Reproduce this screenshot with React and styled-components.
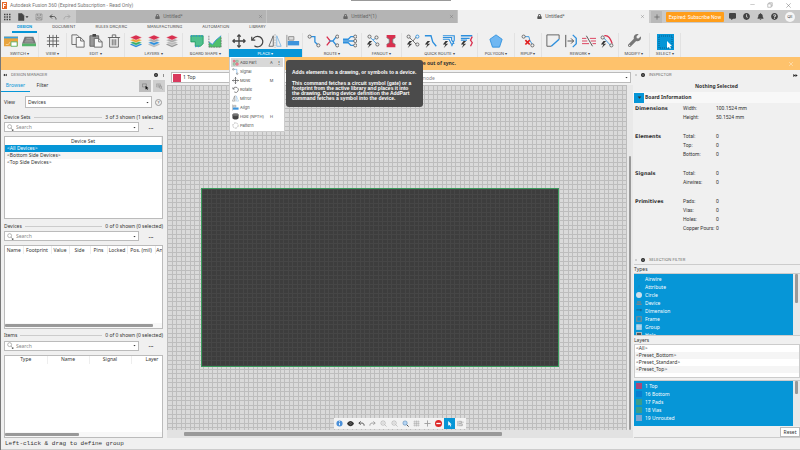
import React, { useState } from 'react';
import styled, { createGlobalStyle } from 'styled-components';
import { FaLock, FaWrench, FaBell, FaQuestionCircle, FaClock, FaCommentAlt } from 'react-icons/fa';

const blue = '#0696d7';
const sans = "'Noto Sans', sans-serif";
const ui = "'Inter', 'Liberation Sans', sans-serif";

const GlobalStyle = createGlobalStyle`
  * { box-sizing: border-box; }
  body {
    margin: 0;
    background: #f0f0f0;
    color: #333;
    font: 5px/7px ${sans};
  }
  button, input, select {
    font: inherit;
    color: inherit;
    margin: 0;
    padding: 0;
    border: 0;
    background: none;
  }
  svg { display: block; flex: none; }
`;

const Page = styled.div`
  display: flex;
  flex-direction: column;
  height: 100vh;
  border-left: 1px solid #777;
  overflow: hidden;
`;

/* ---------- title bar and document tabs ---------- */

const TitleBar = styled.header`
  position: relative;
  display: flex;
  align-items: center;
  gap: 3px;
  height: 10px;
  padding: 0 8px 0 1px;
  background: #fff;
  color: #777;
  font: 5px/8px Roboto, sans-serif;
`;
const TopHandle = styled.i`
  position: absolute;
  top: 0;
  left: 50%;
  width: 100px;
  height: 1px;
  margin-left: -50px;
  background: #999;
`;
const WindowButtons = styled.div`
  display: flex;
  gap: 12px;
  margin-left: auto;
  button { display: flex; }
`;
const TabBar = styled.div`
  display: flex;
  height: 13px;
  background: #c9c9c9;
`;
const QuickAccess = styled.div`
  display: flex;
  align-items: center;
  gap: 6px;
  flex: 0 0 75px;
  padding-left: 2px;
  button { display: flex; align-items: center; }
`;
const DocTab = styled.div`
  flex: 1;
  display: flex;
  align-items: center;
  padding-right: 3px;
  border-right: 1px solid ${({ $active }) => ($active ? '#f0f0f0' : '#c4c4c4')};
  background: ${({ $active }) => ($active ? '#f0f0f0' : '#b4b4b4')};
  color: ${({ $active }) => ($active ? '#555' : '#666')};
  font: 5px/7px Roboto, sans-serif;
`;
const DocName = styled.button`
  flex: 1;
  display: flex;
  align-items: center;
  justify-content: center;
  gap: 3px;
  padding-left: 4px;
`;
const TabTools = styled.div`
  display: flex;
  align-items: center;
  flex: 0 0 151px;
  padding: 0 5px 0 2px;
  color: #444;
`;
const AddTab = styled.button`
  display: flex;
  align-items: center;
  justify-content: center;
  width: 11px;
  height: 12px;
  background: #b9b9b9;
`;
const Subscribe = styled.button`
  width: 58px;
  height: 10px;
  margin: 0 5px 0 4px;
  border-radius: 1px;
  background: #ff9e1b;
  color: #fff;
  font: 5px/10px Roboto, sans-serif;
`;
const TabIcons = styled.div`
  flex: 1;
  display: flex;
  align-items: center;
  justify-content: space-between;
  button { display: flex; }
`;
const Avatar = styled.button`
  justify-content: center;
  width: 10px;
  height: 10px;
  border-radius: 50%;
  background: #f5f5f5;
  font: 4px/10px ${ui};
`;

/* ---------- ribbon ---------- */

const Menu = styled.nav`
  display: flex;
  gap: 10px;
  height: 10px;
  padding-left: 11px;
`;
const MenuItem = styled.button`
  padding: 0 5px;
  border-bottom: 2px solid ${({ $active }) => ($active ? blue : 'transparent')};
  color: ${({ $active }) => ($active ? blue : '#444')};
  font: ${({ $active }) => ($active ? 'bold' : 'normal')} 4px/8px ${ui};
`;
const Ribbon = styled.div`
  display: flex;
  height: 24px;
`;
const Group = styled.div`
  position: relative;
  flex: 0 0 ${({ $width }) => $width}px;
  display: flex;
  flex-direction: column;
  justify-content: space-between;
  border-right: 1px solid #e2e2e2;
`;
const GroupIcons = styled.div`
  display: flex;
  justify-content: center;
  gap: 4px;
  padding-top: 1px;
  button { display: flex; }
`;
const GroupLabel = styled.button`
  height: 8px;
  background: ${({ $active }) => ($active ? blue : 'none')};
  color: ${({ $active }) => ($active ? '#fff' : '#444')};
  font: 4px/7px ${ui};
`;
const Dropdown = styled.div`
  position: absolute;
  z-index: 3;
  top: 24px;
  left: 0;
  width: 56px;
  padding: 1px;
  border: 1px solid #ccc;
  border-top: 0;
  background: #fff;
`;
const DropdownItem = styled.button`
  display: flex;
  align-items: center;
  gap: 1px;
  width: 100%;
  height: 9px;
  padding: 0 2px 0 1px;
  background: ${({ $active }) => ($active ? '#d8d8d8' : 'none')};
  color: #444;
  font: 4px/9px ${ui};
  span { flex: 1; text-align: left; }
  kbd { width: 7px; font: inherit; }
  i { width: 5px; font-style: normal; font-weight: bold; }
`;
const Tooltip = styled.div`
  position: absolute;
  z-index: 3;
  top: 27px;
  left: 57px;
  width: 137px;
  padding: 10px 2px 6px 6px;
  border-radius: 3px;
  background: #4b4b4b;
  color: #fff;
  font: bold 5px/5px 'Liberation Sans', sans-serif;
  p { margin: 0 0 6px; }
  p:last-child { margin: 0; padding-right: 6px; }
`;
const Banner = styled.div`
  display: flex;
  align-items: center;
  justify-content: center;
  height: 13px;
  padding-right: 6px;
  background: #fec26c;
  color: #333;
  font-weight: bold;
  span { flex: 1; text-align: center; }
  button { display: flex; }
`;

/* ---------- panels ---------- */

const Main = styled.main`
  flex: 1;
  display: flex;
  min-height: 0;
`;
const PanelHeader = styled.div`
  display: flex;
  align-items: center;
  gap: 4px;
  height: 10px;
  padding: 0 2px;
  color: #666;
  font: 4px/10px ${ui};
  span { flex: 1; }
`;
const LeftPanel = styled.aside`
  flex: 0 0 166px;
  display: flex;
  flex-direction: column;
  min-width: 0;
`;
const PanelTabs = styled.div`
  display: flex;
  height: 12px;
  padding-right: 2px;
`;
const PanelTab = styled.button`
  width: ${({ $active }) => ($active ? 29 : 25)}px;
  border-bottom: 1px solid ${({ $active }) => ($active ? blue : 'transparent')};
  color: ${({ $active }) => ($active ? blue : '#333')};
`;
const ToolToggle = styled.button`
  display: flex;
  align-items: center;
  justify-content: center;
  width: 12px;
  margin-left: ${({ $first }) => ($first ? 'auto' : '2px')};
  background: ${({ $first }) => ($first ? '#bdbdbd' : '#cfcfcf')};
`;
const ViewRow = styled.div`
  display: flex;
  align-items: center;
  height: 20px;
  padding: 0 5px 0 3px;
  label { width: 21px; }
`;
const Combo = styled.div`
  flex: 1;
  display: flex;
  align-items: center;
  height: ${({ $height }) => $height || 10}px;
  padding: 0 2px;
  border: 1px solid #bbb;
  background: #fff;
  select, input {
    flex: 1;
    min-width: 0;
    width: 100%;
    height: 8px;
    appearance: none;
    outline: none;
  }
  input { padding-left: 2px; }
  input::placeholder { color: #888; }
`;
const HelpButton = styled.button`
  width: 7px;
  height: 7px;
  margin-left: 3px;
  border: 1px solid #999;
  border-radius: 50%;
  font: 4px/5px ${ui};
`;
const Sections = styled.div`
  flex: 1;
  display: flex;
  flex-direction: column;
  gap: 2px;
  min-height: 0;
  padding: 0 4px 0 3px;
`;
const Section = styled.section`
  flex: 1;
  display: flex;
  flex-direction: column;
  min-height: 0;
`;
const Legend = styled.div`
  display: flex;
  align-items: center;
  gap: 3px;
  height: 10px;
  &::before { content: ''; order: 1; flex: 1; height: 1px; background: #ccc; }
  span:last-child { order: 2; }
`;
const SearchRow = styled.div`
  display: flex;
  align-items: center;
  margin-bottom: 4px;
`;
const MoreButton = styled.button`
  width: 24px;
  height: 10px;
  font-weight: bold;
  font-size: 6px;
`;
const TableBox = styled.div`
  flex: 1;
  display: flex;
  flex-direction: column;
  justify-content: space-between;
  min-height: 0;
  overflow: hidden;
  border: 1px solid #bbb;
  background: #fff;
`;
const Table = styled.table`
  table-layout: fixed;
  border-collapse: collapse;
  width: ${({ $width }) => ($width ? `${$width}px` : '100%')};
  th {
    position: relative;
    height: 8px;
    padding: 0;
    border-right: 1px solid #eee;
    font-weight: normal;
    white-space: nowrap;
    text-align: center;
  }
  th[aria-sort]::before {
    content: '⌃';
    position: absolute;
    top: -2px;
    right: 0;
    left: 0;
    color: #888;
    font: 4px/4px 'DejaVu Sans', sans-serif;
  }
  td { height: 7px; padding: 0 2px; line-height: 7px; }
  tbody tr:nth-child(2) { background: #f5f5f5; }
  tbody tr[aria-selected='true'] { background: ${blue}; color: #fff; }
`;
const ScrollBar = styled.div`
  height: 5px;
  padding: 1px 0;
  background: #f8f8f8;
  &::before {
    content: '';
    display: block;
    width: ${({ $width }) => $width};
    height: 3px;
    border-radius: 1px;
    background: #999;
  }
`;

/* ---------- drawing area ---------- */

const Center = styled.div`
  flex: 1;
  display: flex;
  flex-direction: column;
  min-width: 0;
`;
const LayerBar = styled.div`
  display: flex;
  gap: 4px;
  height: 15px;
  padding: 2px 2px 0 4px;
`;
const LayerSelect = styled(Combo)`
  flex: 0 0 124px;
  height: 11px;
  padding-left: 1px;
  gap: 2px;
`;
const Swatch = styled.i`
  flex: none;
  width: ${({ $size }) => $size}px;
  height: ${({ $size }) => $size}px;
  background: ${({ $color }) => $color};
`;
const CanvasRow = styled.div`
  flex: 1;
  display: flex;
  min-height: 0;
`;
const Canvas = styled.div`
  position: relative;
  flex: 1;
  background:
    repeating-linear-gradient(90deg, #bdbdbd 0 1px, transparent 1px 5px, #bdbdbd 5px 6px, transparent 6px 9px),
    repeating-linear-gradient(#bdbdbd 0 1px, transparent 1px 5px, #bdbdbd 5px 6px, transparent 6px 9px),
    #dadada;
`;
const Board = styled.div`
  position: absolute;
  top: 103px;
  left: 34px;
  width: 358px;
  height: 179px;
  border: 1px solid #3a9a5c;
  background:
    repeating-linear-gradient(90deg, #464646 0 1px, transparent 1px 5px, #464646 5px 6px, transparent 6px 9px),
    repeating-linear-gradient(#464646 0 1px, transparent 1px 5px, #464646 5px 6px, transparent 6px 9px),
    #3d3d3d;
`;
const ViewTools = styled.div`
  position: absolute;
  bottom: 1px;
  left: 50%;
  display: flex;
  height: 11px;
  transform: translateX(-63px);
  background: #f2f2f2;
`;
const ViewTool = styled.button`
  display: flex;
  align-items: center;
  justify-content: center;
  width: 11px;
  background: ${({ $active }) => ($active ? blue : 'none')};
`;
const VScroll = styled.div`
  width: ${({ $width }) => $width}px;
  padding: ${({ $top }) => $top}px 2px 0;
  background: #e9e9e9;
  &::before {
    content: '';
    display: block;
    height: ${({ $thumb }) => $thumb};
    border-radius: 1px;
    background: #999;
  }
`;
const HScroll = styled.div`
  height: 8px;
  padding: 2px 131px 2px 17px;
  background: #e2e2e2;
  &::before {
    content: '';
    display: block;
    height: 4px;
    border-radius: 1px;
    background: #999;
  }
`;

/* ---------- right side ---------- */

const RightPanel = styled.aside`
  flex: 0 0 167px;
  display: flex;
  flex-direction: column;
`;
const Inspector = styled.section`
  flex: 1;
  h2 { margin: 0; font-size: 5px; line-height: 12px; text-align: center; }
`;
const InfoHeader = styled.h3`
  display: flex;
  align-items: center;
  gap: 1px;
  height: 11px;
  margin: 0 0 1px;
  padding-left: 1px;
  background: #f8f8f8;
  font-size: 5px;
  button {
    display: flex;
    align-items: center;
    justify-content: center;
    width: 10px;
    height: 10px;
    background: ${blue};
  }
`;
const InfoGroup = styled.div`
  display: flex;
  margin-bottom: 10px;
  padding-left: 2px;
  h4 { width: 48px; margin: 0; font: bold 5px/9px 'DejaVu Sans', sans-serif; }
  dl {
    display: grid;
    grid-template-columns: 33px auto;
    margin: 0;
    font: 5px/9px Roboto, sans-serif;
  }
  dd { margin: 0; }
`;
const FilterPanel = styled.section`
  display: flex;
  flex-direction: column;
  padding-left: 1px;
  h3 { margin: 0; border-top: 1px solid #ccc; font: 5px/8px ${sans}; }
`;
const FilterHeader = styled(PanelHeader)`
  height: 9px;
  padding-left: 1px;
`;
const ListRow = styled.div`
  display: flex;
  height: ${({ $height }) => $height}px;
  border-top: 1px solid #ccc;
  background: #fff;
`;
const BlueList = styled.ul`
  flex: 1;
  margin: 0;
  padding: 1px 0 0 2px;
  overflow: hidden;
  list-style: none;
  background: ${blue};
  color: #fff;
  li { display: flex; align-items: center; gap: 3px; height: 8px; }
`;
const PresetList = styled.ul`
  height: 34px;
  margin: 0 0 2px;
  padding: 0;
  border: 1px solid #ccc;
  list-style: none;
  background: #fff;
  li { height: 7px; padding-left: 1px; }
  li:nth-child(even) { background: #f5f5f5; }
`;
const FilterFooter = styled.div`
  display: flex;
  justify-content: flex-end;
  padding-top: 1px;
  border-bottom: 1px solid #ccc;
  button {
    width: 20px;
    height: 10px;
    border: 1px solid #bbb;
    background: #fff;
  }
`;
const StatusBar = styled.footer`
  height: 12px;
  padding-left: 4px;
  border-bottom: 1px solid #ccc;
  font: 6px/12px 'Liberation Mono', monospace;
`;

/* ---------- icons ---------- */

const k = '#606060';
const b = '#2d8fdd';
const r = '#d9304f';
const node = (x, y, c = k) => <circle cx={x} cy={y} r="1.8" stroke={c} fill="#f0f0f0" />;
const bolt = <path d="M4 8 1 12h3l-2 4 5-5H4l3-3z" fill="#333" stroke="none" />;
const stack = (a, m, z, g) => (
  <>
    {g && <path d="M1 12l7-3 7 3-7 3z" fill={g} stroke="none" />}
    <path d="M1 10l7-3 7 3-7 3z" fill={z} stroke="#f0f0f0" strokeWidth=".6" />
    <path d="M1 7l7-3 7 3-7 3z" fill={m} stroke="#f0f0f0" strokeWidth=".6" />
    <path d="M1 4l7-3 7 3-7 3z" fill={a} stroke="#f0f0f0" strokeWidth=".6" />
  </>
);

const shapes = {
  schematic: <><path d="M0 3h16v11H0z" fill="#e8a33d" stroke="none" /><path d="M0 3h16v2H0z" fill="#3aa0dc" stroke="none" /><path d="M8 9h7v5H8z" fill="#fff" stroke="#56b36b" /><path d="M2 12h3l2-3" stroke="#f7d29a" /></>,
  board3d: <><path d="M3 3h10l3 8H0z" fill="#777" stroke="none" /><path d="M0 11h16v3H0z" fill="#54b36a" stroke="none" /><path d="M5 5h6M4 7h8M3 9h10" stroke="#bbb" strokeWidth=".8" /></>,
  grid: <path d="M4 1v14M8 1v14M12 1v14M1 4h14M1 8h14M1 12h14" />,
  copy: <><path d="M1 1h6l3 3v8H1z" fill="#f0f0f0" /><path d="M6 4h5l4 4v7H6z" fill="#f7f7f7" /><path d="M11 4v4h4" /></>,
  paste: <><path d="M1 2h10v12H1z" fill="#999" /><path d="M4 0h4v3H4z" fill="#444" stroke="none" /><path d="M6 5h5l4 4v6H6z" fill="#f7f7f7" /><path d="M11 5v4h4" /></>,
  trash: <><path d="M3 4h10v11H3z" fill="#eee" /><path d="M1 4h14M6 4V1h4v3M6 6v7M8 6v7M10 6v7" /></>,
  layersAll: stack('#d9304f', '#f0a22e', '#35b06a', '#2d8fdd'),
  layersBlue: stack('#d9304f', '#aaa', '#2d8fdd', '#bbb'),
  layersGrey: stack('#d9304f', '#aaa', '#bbb', '#999'),
  outline: <><path d="M1 2h14v9l-3 3H6V9H1z" fill="#4fc08d" stroke="#1f9d60" /><path d="M1 2h14M6 14h6" stroke={b} strokeDasharray="1 2" strokeWidth="2" /></>,
  area: <><path d="M1 15V9l4 3 4-5 6-5v13z" fill="#4fc06d" stroke="none" /><path d="M1 2v13h14V3" stroke={k} strokeDasharray="2 1" strokeWidth=".8" /><path d="M1 9l4 3 4-5 6-5" stroke={b} /></>,
  move: <path d="M8 1v14M1 8h14M6 3l2-2 2 2M6 13l2 2 2-2M3 6L1 8l2 2M13 6l2 2-2 2" stroke="#444" strokeWidth="1.5" />,
  rotate: <path d="M5 13.500a6 6 0 1 0-2-7M2 3v4h4" stroke="#444" strokeWidth="1.400" />,
  mirror: <><path d="M6 2v12H1z" /><path d="M10 2v12h5z" stroke="#80b6e0" /><path d="M8 0v16" stroke="#999" strokeDasharray="2 1" strokeWidth=".7" /></>,
  align: <><path d="M1 1v14" stroke="#888" /><path d="M3 3h6v4H3z" fill="#ddd" stroke="#888" /><path d="M2 8h13v5H2z" fill="#3d94dc" stroke="none" /></>,
  route: <><path d="M4 3h5v6l3 3" stroke={b} strokeWidth="1.500" />{node(3, 3)}{node(13, 13)}</>,
  routeX: <><path d="M2 3l4 5M2 13l4-5" stroke={r} strokeWidth="1.500" /><path d="M13 3L9 8l4 5M5 8h5" stroke={b} strokeWidth="1.500" />{node(14, 3)}{node(14, 13)}</>,
  routeMulti: <><path d="M0 6h6l3-3h4M0 8h13M0 10h6l3 3h4" stroke={b} strokeWidth="1.500" />{node(14, 3)}{node(14, 8)}{node(14, 13)}</>,
  fanout: <><path d="M4 3l4 4 4-3M8 7l5 5" stroke={b} />{node(4, 3)}{node(12, 4)}{node(13, 12)}{bolt}</>,
  via: <><path d="M3 1h10v3l-3 2v4l3 2v3H3v-3l3-2V6L3 4z" fill={r} stroke="none" /><path d="M3 4l3 2v4l-3 2M13 4l-3 2v4l3 2" stroke="#777" /></>,
  quick1: <><path d="M3 3l9 9M12 3L8 8" stroke={k} />{node(3, 3)}{node(13, 3, b)}{node(13, 12)}{bolt}</>,
  quick2: <><path d="M1 2h7l2 7 4 5" stroke={b} strokeWidth="1.500" />{bolt}</>,
  quick3: <><path d="M1 2h13v5l-3 7M1 4h10v3l3 4M1 6h7l3 6" stroke={b} strokeWidth="1.300" />{bolt}</>,
  quick4: <><path d="M1 2h13M1 5h10M1 7h7" stroke={b} strokeWidth="1.500" /><path d="M14 3l-2 4 2 3-2 4" stroke={r} strokeWidth="1.500" />{bolt}</>,
  polygon: <path d="M8 1l7 5-3 9H4L1 6z" fill="#6fb7f2" stroke={b} />,
  ripup: <><path d="M4 3h5l1 4 3 5" stroke={b} />{node(3, 3)}{node(13, 13)}<path d="M5 7l5 5M10 7l-5 5" stroke="#e02020" strokeWidth="2" /></>,
  slice: <><path d="M15 1H1v13h5M15 1v5" stroke="#555" /><path d="M6 14l9-8" stroke={b} strokeWidth="1.700" /></>,
  arrowTo: <><path d="M2 1v14M4 8h7M8 5l3 3-3 3" stroke="#444" /><path d="M10 1l4 4v6l-4 4" stroke={b} strokeWidth="1.500" /></>,
  cutLines: <><path d="M0 5h5M9 5h7M0 8h6M10 8h6M0 11h8M12 11h4" stroke={r} /><path d="M5 2l7 12" stroke="#444" /></>,
  rework: <><path d="M3 3l9 10" stroke={b} /><path d="M5 2c5-1 7 4 9 9" stroke={r} strokeWidth="1.500" />{node(3, 4)}{node(13, 13)}{bolt}</>,
  part: <><path d="M3 3h4v4H3zM9 9h5v5H9z" stroke={r} fill="#f2a0ae" /><path d="M9 3h5v4H9zM3 9h4v5H3z" stroke="#44a060" /></>,
  signal: <><path d="M2 3h9v11" stroke={b} />{node(3, 3)}{node(12, 13)}</>,
  hole: <><path d="M1 4v8c3 4 11 4 14 0V4z" fill="#444" stroke="none" /><ellipse cx="8" cy="4" rx="7" ry="3" fill="#777" /></>,
  pattern: <circle cx="8" cy="8" r="6" strokeDasharray="4 2" />,
  x: <path d="M3 3l10 10M13 3L3 13" />,
  minus: <path d="M1 8h14" />,
  restore: <path d="M2 5h9v9H2zM5 5V2h9v9h-3" />,
  plus: <path d="M8 1v14M1 8h14" strokeWidth="2" />,
  apps: <path d="M2 3h3M7 3h3M12 3h3M2 8h3M7 8h3M12 8h3M2 13h3M7 13h3M12 13h3" strokeWidth="3" />,
  file: <path d="M3 1h7l4 4v10H3z" fill="currentColor" />,
  save: <path d="M2 2h12v12H2zM5 2v4h6V2M4 14V9h8v5M6 11h4" />,
  undo: <path d="M6 3L2 7l4 4M2 7h7c4 0 5 3 5 6" strokeWidth="2" />,
  redo: <path d="M10 3l4 4-4 4M14 7H7c-4 0-5 3-5 6" strokeWidth="2" />,
  circleMinus: <><circle cx="8" cy="8" r="8" fill="#222" stroke="none" /><path d="M4 8h8" stroke="#fff" strokeWidth="2" /></>,
  left2: <path d="M8 3v10L1 8zM15 3v10L8 8z" fill="#222" stroke="none" />,
  right2: <path d="M8 3v10l7-5zM1 3v10l7-5z" fill="#222" stroke="none" />,
  grip: <path d="M8 0v16" stroke="#888" strokeWidth="5" />,
  caret: <path d="M2 5h12l-6 7z" fill="#333" stroke="none" />,
  search: <><circle cx="6" cy="6" r="4.500" /><path d="M9 9l5 5" /><path d="M10 13h6l-3 3z" fill="#333" stroke="none" /></>,
  pick: <><path d="M1 2h9v7H1z" /><path d="M8 6v9l2-2 2 3 1-1-1-3h3z" fill="#111" stroke="none" /></>,
  pickZoom: <><path d="M1 2h9v7H1zM3 4h5M3 6h5" stroke="#888" /><circle cx="10" cy="9" r="3" stroke="#777" /><path d="M12 11l3 4" stroke="#777" /></>,
  info: <><circle cx="8" cy="8" r="7" fill="#4a90d9" stroke="none" /><path d="M8 7v5M8 3v2" stroke="#fff" strokeWidth="2" /></>,
  eye: <><path d="M0 8c4-8 12-8 16 0-4 8-12 8-16 0z" fill="#333" stroke="none" /><circle cx="8" cy="8" r="2" stroke="#999" /></>,
  zoomIn: <><circle cx="7" cy="7" r="5" /><path d="M11 11l4 4M5 7h4" /></>,
  zoomFit: <><circle cx="7" cy="7" r="5" fill="#b5d4f2" stroke="#3470a8" /><path d="M11 11l4 4" stroke="#333" strokeWidth="2" /></>,
  stop: <><circle cx="8" cy="8" r="8" fill="#dc2626" stroke="none" /><path d="M3 8h10" stroke="#fff" strokeWidth="3" /></>,
  cursor: <path d="M5 2v11l3-2 2 4 2-1-2-4h3z" fill="#fff" stroke="none" />,
  selectMode: <path d="M2 2v12M4 3h6v4H4M4 9h8v4H4M12 5h3" />,
  airwire: <path d="M3 13L13 3" stroke="#1b83bd" />,
  attribute: <path d="M4 14L8 4l4 10" stroke="#1b83bd" />,
  circle: <circle cx="8" cy="8" r="8" fill="#cfe0ec" stroke="none" />,
  device: <path d="M3 3h10v4H3zM1 9h14v4H1z" fill="#75858f" stroke="none" />,
  dimension: <path d="M1 5h14M13 3v6" stroke="#24587a" strokeWidth="2" />,
  frame: <path d="M2 2h12v12H2z" stroke="#7d8a90" strokeWidth="3" />,
  group: <path d="M1 1h14v14H1zM5 1v14M1 6h14" fill="#a9cfe8" stroke="#d6e6f0" />,
  holeType: <path d="M1 1h14v14H1z" fill="#555" stroke="#ddd" strokeWidth="2" />,
};

const Icon = ({ name, size = 14, color = k }) => (
  <svg width={size} height={size} viewBox="0 0 16 16" fill="none" stroke={color} color={color} strokeWidth="1" aria-hidden="true">
    {shapes[name]}
  </svg>
);

const SelectIcon = () => (
  <svg width="17" height="16" viewBox="0 0 17 16" aria-hidden="true">
    <path d="M0 0h17v16H0z" fill={blue} />
    <path d="M2 2h13v12H2z" fill="none" stroke="#0a5f8c" strokeDasharray="1 1" />
    <path d="M10 7v7l2-1 1 2 1-1-1-2h2z" fill="#fff" />
  </svg>
);

const Logo = () => (
  <svg width="5" height="7" viewBox="0 0 10 14" aria-hidden="true">
    <path d="M0 0h10v14H0z" fill="#e8682a" />
    <path d="M3 12V3h5M3 7h4" stroke="#fff" strokeWidth="2" fill="none" />
  </svg>
);

/* ---------- data ---------- */

const menus = ['DESIGN', 'DOCUMENT', 'RULES DRC/ERC', 'MANUFACTURING', 'AUTOMATION', 'LIBRARY'];

const groups = [
  { label: 'SWITCH', width: 38, icons: ['schematic', 'board3d'] },
  { label: 'VIEW', width: 28, icons: ['grid'] },
  { label: 'EDIT', width: 58, icons: ['copy', 'paste', 'trash'] },
  { label: 'LAYERS', width: 58, icons: ['layersAll', 'layersBlue', 'layersGrey'] },
  { label: 'BOARD SHAPE', width: 46, icons: ['outline', 'area'] },
  { label: 'PLACE', width: 74, icons: ['move', 'rotate', 'mirror', 'align'] },
  { label: 'ROUTE', width: 59, icons: ['route', 'routeX', 'routeMulti'] },
  { label: 'FANOUT', width: 40, icons: ['fanout', 'via'] },
  { label: 'QUICK ROUTE', width: 76, icons: ['quick1', 'quick2', 'quick3', 'quick4'] },
  { label: 'POLYGON', width: 37, icons: ['polygon'] },
  { label: 'RIPUP', width: 27, icons: ['ripup'] },
  { label: 'REWORK', width: 77, icons: ['slice', 'arrowTo', 'cutLines', 'rework'] },
  { label: 'MODIFY', width: 31, icons: ['wrench'] },
  { label: 'SELECT', width: 31, icons: ['select'] },
];

const placeItems = [
  ['part', 'Add Part', 'A'],
  ['signal', 'Signal'],
  ['move', 'Move', 'M'],
  ['rotate', 'Rotate'],
  ['mirror', 'Mirror'],
  ['align', 'Align'],
  ['hole', 'Hole (NPTH)', 'H'],
  ['pattern', 'Pattern'],
];

const info = [
  ['Dimensions', [['Width:', '100.1524 mm'], ['Height:', '50.1524 mm']]],
  ['Elements', [['Total:', 0], ['Top:', 0], ['Bottom:', 0]]],
  ['Signals', [['Total:', 0], ['Airwires:', 0]]],
  ['Primitives', [['Pads:', 0], ['Vias:', 0], ['Holes:', 0], ['Copper Pours:', 0]]],
];

const types = ['Airwire', 'Attribute', 'Circle', 'Device', 'Dimension', 'Frame', 'Group', 'Hole'];
const typeIcon = (t) => (t === 'Hole' ? 'holeType' : t.toLowerCase());

const layers = [
  ['1 Top', '#a8487a'],
  ['16 Bottom', '#0a7fd0'],
  ['17 Pads', '#3c9c8c'],
  ['18 Vias', '#3c9c8c'],
  ['19 Unrouted', '#7fa6cf'],
];

const viewTools = ['info', 'eye', 'undo', 'redo', 'zoomIn', 'zoomIn', 'zoomFit', 'grid', 'plus', 'stop', 'cursor', 'selectMode'];
const toolColor = { undo: '#444', redo: '#999', grid: '#999', plus: '#999', zoomIn: '#888' };

const SearchSection = ({ title, count, children }) => (
  <Section>
    <Legend><span>{title}</span><span>{count}</span></Legend>
    <SearchRow>
      <Combo>
        <Icon name="search" size={7} />
        <input type="text" placeholder="Search" aria-label={`Search ${title}`} />
        <Icon name="caret" size={3} />
      </Combo>
      <MoreButton aria-label={`${title} options`}>...</MoreButton>
    </SearchRow>
    <TableBox>{children}</TableBox>
  </Section>
);

const Columns = ({ names, widths, width }) => (
  <Table $width={width}>
    <colgroup>{widths.map((w, i) => <col key={i} width={w} />)}</colgroup>
    <thead>
      <tr>{names.map((n, i) => <th key={n} aria-sort={i === 0 ? 'ascending' : undefined}>{n}</th>)}</tr>
    </thead>
  </Table>
);

const App = () => {
  const [menu, setMenu] = useState('DESIGN');
  const [device, setDevice] = useState('<All Devices>');

  const renderIcon = (name) => {
    if (name === 'wrench') return <FaWrench size={13} color="#777" />;
    if (name === 'select') return <SelectIcon />;
    return <Icon name={name} />;
  };

  return (
    <Page>
      <GlobalStyle />
      <TitleBar>
        <TopHandle />
        <Logo />
        Autodesk Fusion 360 (Expired Subscription - Read Only)
        <WindowButtons>
          <button aria-label="Minimize"><Icon name="minus" size={5} /></button>
          <button aria-label="Restore"><Icon name="restore" size={6} /></button>
          <button aria-label="Close"><Icon name="x" size={7} /></button>
        </WindowButtons>
      </TitleBar>
      <TabBar>
        <QuickAccess>
          <button aria-label="Data panel"><Icon name="apps" size={8} color="#444" /></button>
          <button aria-label="File"><Icon name="file" size={8} color="#444" /><Icon name="caret" size={4} /></button>
          <button aria-label="Save"><Icon name="save" size={8} color="#777" /></button>
          <button aria-label="Undo"><Icon name="undo" size={8} color="#555" /></button>
          <button aria-label="Redo"><Icon name="redo" size={8} color="#aaa" /></button>
        </QuickAccess>
        {['Untitled*', 'Untitled*(1)', 'Untitled*'].map((name, i) => (
          <DocTab key={i} $active={i === 2}>
            <DocName><FaLock size={5} />{name}</DocName>
            <button aria-label="Close tab"><Icon name="x" size={5} /></button>
          </DocTab>
        ))}
        <TabTools>
          <AddTab aria-label="New tab"><Icon name="plus" size={6} color="#666" /></AddTab>
          <Subscribe>Expired: Subscribe Now</Subscribe>
          <TabIcons>
            <button aria-label="Comments"><FaCommentAlt size={7} /></button>
            <button aria-label="Jobs"><FaClock size={7} /></button>
            <button aria-label="Notifications"><FaBell size={7} /></button>
            <button aria-label="Help"><FaQuestionCircle size={7} /></button>
            <Avatar>QE</Avatar>
          </TabIcons>
        </TabTools>
      </TabBar>

      <Menu>
        {menus.map((m) => (
          <MenuItem key={m} $active={m === menu} onClick={() => setMenu(m)}>{m}</MenuItem>
        ))}
      </Menu>
      <Ribbon>
        {groups.map(({ label, width, icons }) => (
          <Group key={label} $width={width}>
            <GroupIcons>
              {icons.map((name) => (
                <button key={name} aria-label={name}>{renderIcon(name)}</button>
              ))}
            </GroupIcons>
            <GroupLabel $active={label === 'PLACE'}>{label} ▾</GroupLabel>
            {label === 'PLACE' && (
              <>
                <Dropdown>
                  {placeItems.map(([icon, text, key], i) => (
                    <DropdownItem key={text} $active={i === 0}>
                      <Icon name={icon} size={7} />
                      <span>{text}</span>
                      <kbd>{key}</kbd>
                      <i>{i === 0 && '⋮'}</i>
                    </DropdownItem>
                  ))}
                </Dropdown>
                <Tooltip role="tooltip">
                  <p>Adds elements to a drawing, or symbols to a device.</p>
                  <p>
                    This command fetches a circuit symbol (gate) or a footprint from the active library
                    and places it into the drawing. During device definition the AddPart command fetches
                    a symbol into the device.
                  </p>
                </Tooltip>
              </>
            )}
          </Group>
        ))}
      </Ribbon>
      <Banner>
        <span>The schematic and the PCB board are out of sync.</span>
        <button aria-label="Dismiss"><Icon name="x" size={6} color="#fff" /></button>
      </Banner>

      <Main>
        <LeftPanel>
          <PanelHeader>
            <Icon name="left2" size={4} />
            <span>DESIGN MANAGER</span>
            <Icon name="circleMinus" size={4} />
            <Icon name="grip" size={3} />
          </PanelHeader>
          <PanelTabs>
            <PanelTab $active>Browser</PanelTab>
            <PanelTab>Filter</PanelTab>
            <ToolToggle $first aria-label="Select"><Icon name="pick" size={7} /></ToolToggle>
            <ToolToggle aria-label="Zoom to selection"><Icon name="pickZoom" size={7} /></ToolToggle>
          </PanelTabs>
          <ViewRow>
            <label htmlFor="view">View</label>
            <Combo $height={12}>
              <select id="view"><option>Devices</option></select>
              <Icon name="caret" size={3} />
            </Combo>
            <HelpButton aria-label="Help">?</HelpButton>
          </ViewRow>
          <Sections>
            <SearchSection title="Device Sets" count="3 of 3 shown (1 selected)">
              <Table>
                <thead><tr><th aria-sort="ascending">Device Set</th></tr></thead>
                <tbody>
                  {['<All Devices>', '<Bottom Side Devices>', '<Top Side Devices>'].map((d) => (
                    <tr key={d} aria-selected={d === device} onClick={() => setDevice(d)}><td>{d}</td></tr>
                  ))}
                </tbody>
              </Table>
            </SearchSection>
            <SearchSection title="Devices" count="0 of 0 shown (0 selected)">
              <Columns
                width={159}
                names={['Name', 'Footprint', 'Value', 'Side', 'Pins', 'Locked', 'Pos. (mil)', 'An']}
                widths={[18, 28, 18, 21, 17, 20, 28, 9]}
              />
              <ScrollBar $width="94%" />
            </SearchSection>
            <SearchSection title="Items" count="0 of 0 shown (0 selected)">
              <Columns width={168} names={['Type', 'Name', 'Signal', 'Layer']} widths={[42, 42, 42, 42]} />
              <ScrollBar $width="47%" />
            </SearchSection>
          </Sections>
        </LeftPanel>

        <Center>
          <LayerBar>
            <LayerSelect>
              <Swatch $size={8} $color="#d93a5e" />
              <select aria-label="Layer"><option>1 Top</option></select>
              <Icon name="caret" size={3} />
            </LayerSelect>
            <Combo $height={11}>
              <input type="text" aria-label="Command" placeholder="Click or press Ctrl+L key to activate command line mode" />
              <Icon name="caret" size={3} />
            </Combo>
          </LayerBar>
          <CanvasRow>
            <Canvas>
              <Board />
              <ViewTools>
                {viewTools.map((name, i) => (
                  <ViewTool key={i} aria-label={name} $active={name === 'cursor'}>
                    <Icon name={name} size={7} color={toolColor[name]} />
                  </ViewTool>
                ))}
              </ViewTools>
            </Canvas>
            <VScroll $width={6} $top={71} $thumb="100%" />
          </CanvasRow>
          <HScroll />
        </Center>

        <RightPanel>
          <Inspector>
            <PanelHeader>
              <Icon name="grip" size={2} />
              <Icon name="circleMinus" size={4} />
              <span>INSPECTOR</span>
              <Icon name="right2" size={5} />
            </PanelHeader>
            <h2>Nothing Selected</h2>
            <InfoHeader>
              <button aria-label="Collapse board information"><Icon name="caret" size={5} /></button>
              Board Information
            </InfoHeader>
            {info.map(([title, rows]) => (
              <InfoGroup key={title}>
                <h4>{title}</h4>
                <dl>
                  {rows.map(([label, value]) => (
                    <React.Fragment key={label}><dt>{label}</dt><dd>{value}</dd></React.Fragment>
                  ))}
                </dl>
              </InfoGroup>
            ))}
          </Inspector>
          <FilterPanel>
            <FilterHeader>
              <Icon name="grip" size={2} />
              <Icon name="circleMinus" size={4} />
              <span>SELECTION FILTER</span>
            </FilterHeader>
            <h3>Types</h3>
            <ListRow $height={62}>
              <BlueList>
                {types.map((t) => <li key={t}><Icon name={typeIcon(t)} size={6} />{t}</li>)}
              </BlueList>
              <VScroll $width={7} $top={0} $thumb="29px" />
            </ListRow>
            <h3>Layers</h3>
            <PresetList>
              {['<All>', '<Preset_Bottom>', '<Preset_Standard>', '<Preset_Top>'].map((p) => <li key={p}>{p}</li>)}
            </PresetList>
            <ListRow $height={46}>
              <BlueList>
                {layers.map(([name, color]) => <li key={name}><Swatch $size={6} $color={color} />{name}</li>)}
              </BlueList>
              <VScroll $width={7} $top={0} $thumb="13px" />
            </ListRow>
            <FilterFooter><button>Reset</button></FilterFooter>
          </FilterPanel>
        </RightPanel>
      </Main>
      <StatusBar>Left-click &amp; drag to define group</StatusBar>
    </Page>
  );
};

export default App;
